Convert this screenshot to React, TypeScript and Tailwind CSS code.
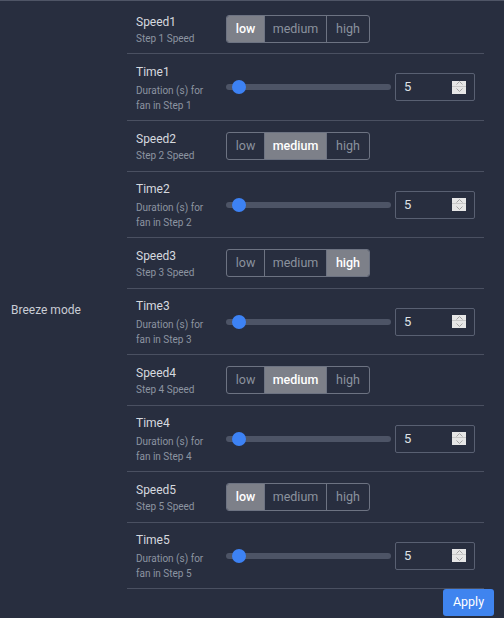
import React from "react";

type Level = "low" | "medium" | "high";

const steps: { n: number; level: Level }[] = [
  { n: 1, level: "low" },
  { n: 2, level: "medium" },
  { n: 3, level: "high" },
  { n: 4, level: "medium" },
  { n: 5, level: "low" },
];

function Segments({ active }: { active: Level }) {
  const items: { key: Level; w: string }[] = [
    { key: "low", w: "w-[37px]" },
    { key: "medium", w: "w-[62px]" },
    { key: "high", w: "w-[43px]" },
  ];
  return (
    <div className="flex h-[28px] border border-[#6d7382] rounded-[3px] overflow-hidden">
      {items.map((it, i) => (
        <div
          key={it.key}
          className={`${it.w} flex items-center justify-center text-[12.5px] ${
            i > 0 ? "border-l border-[#6d7382]" : ""
          } ${
            active === it.key
              ? "bg-[#7d8089] text-white font-medium"
              : "text-[#8b929e]"
          }`}
        >
          {it.key}
        </div>
      ))}
    </div>
  );
}

function Spinner() {
  return (
    <div className="w-[14px] h-[13px] bg-[#e6e6e6] flex flex-col">
      <div className="h-[6px] flex items-center justify-center border-b border-[#c8c8c8]">
        <svg width="7" height="4" viewBox="0 0 7 4">
          <path d="M0.5 3.5 L3.5 0.5 L6.5 3.5" fill="none" stroke="#a3a3a3" strokeWidth="1" />
        </svg>
      </div>
      <div className="flex-1 flex items-center justify-center">
        <svg width="7" height="4" viewBox="0 0 7 4">
          <path d="M0.5 0.5 L3.5 3.5 L6.5 0.5" fill="none" stroke="#a3a3a3" strokeWidth="1" />
        </svg>
      </div>
    </div>
  );
}

function TimeControl() {
  return (
    <div className="flex items-center">
      <div className="relative w-[165px] h-[6px] rounded-full bg-[#4d5466]">
        <div className="absolute left-[6px] top-[-4px] w-[14px] h-[14px] rounded-full bg-[#3d82f4]" />
      </div>
      <div className="ml-[4px] w-[80px] h-[28px] border border-[#596072] rounded-[2px] flex items-center pl-[8px] pr-[8px]">
        <span className="flex-1 text-[13px] text-[#dfe2e7]">5</span>
        <Spinner />
      </div>
    </div>
  );
}

export default function App() {
  return (
    <div
      className="w-[504px] h-[618px] bg-[#282e3f] border-t border-[#4f5566] flex overflow-hidden"
      style={{ fontFamily: 'Roboto, "Noto Sans", sans-serif' }}
    >
      <div className="w-[127px] flex items-center pl-[11px] text-[12px] text-[#c9cdd5]">
        Breeze mode
      </div>
      <div className="flex flex-col w-[367px]">
        <div className="w-[357px] flex flex-col">
          {steps.map((s, idx) => (
            <React.Fragment key={s.n}>
              <div
                className={`flex items-center pl-[9px] border-b border-[#4a5061] ${
                  idx === 0 ? "h-[53px] pt-[4px]" : "h-[51px]"
                }`}
              >
                <div className="w-[90px] flex flex-col pt-[2px]">
                  <div className="text-[12px] leading-[18px] text-[#d6d9df]">Speed{s.n}</div>
                  <div className="text-[10px] leading-[16px] text-[#8c94a1]">
                    Step {s.n} Speed
                  </div>
                </div>
                <Segments active={s.level} />
              </div>
              <div
                className={`flex items-center pl-[9px] border-b border-[#4a5061] ${
                  idx === 0 ? "h-[67px]" : "h-[66px]"
                }`}
              >
                <div className="w-[90px] flex flex-col">
                  <div className="text-[12px] leading-[21px] text-[#d6d9df]">Time{s.n}</div>
                  <div className="w-[76px] text-[10px] leading-[15px] text-[#8c94a1]">
                    Duration (s) for fan in Step {s.n}
                  </div>
                </div>
                <TimeControl />
              </div>
            </React.Fragment>
          ))}
        </div>
        <div className="flex justify-end">
          <button className="w-[51px] h-[27px] rounded-[3px] bg-[#3f84ef] text-white text-[12.5px]">
            Apply
          </button>
        </div>
      </div>
    </div>
  );
}
